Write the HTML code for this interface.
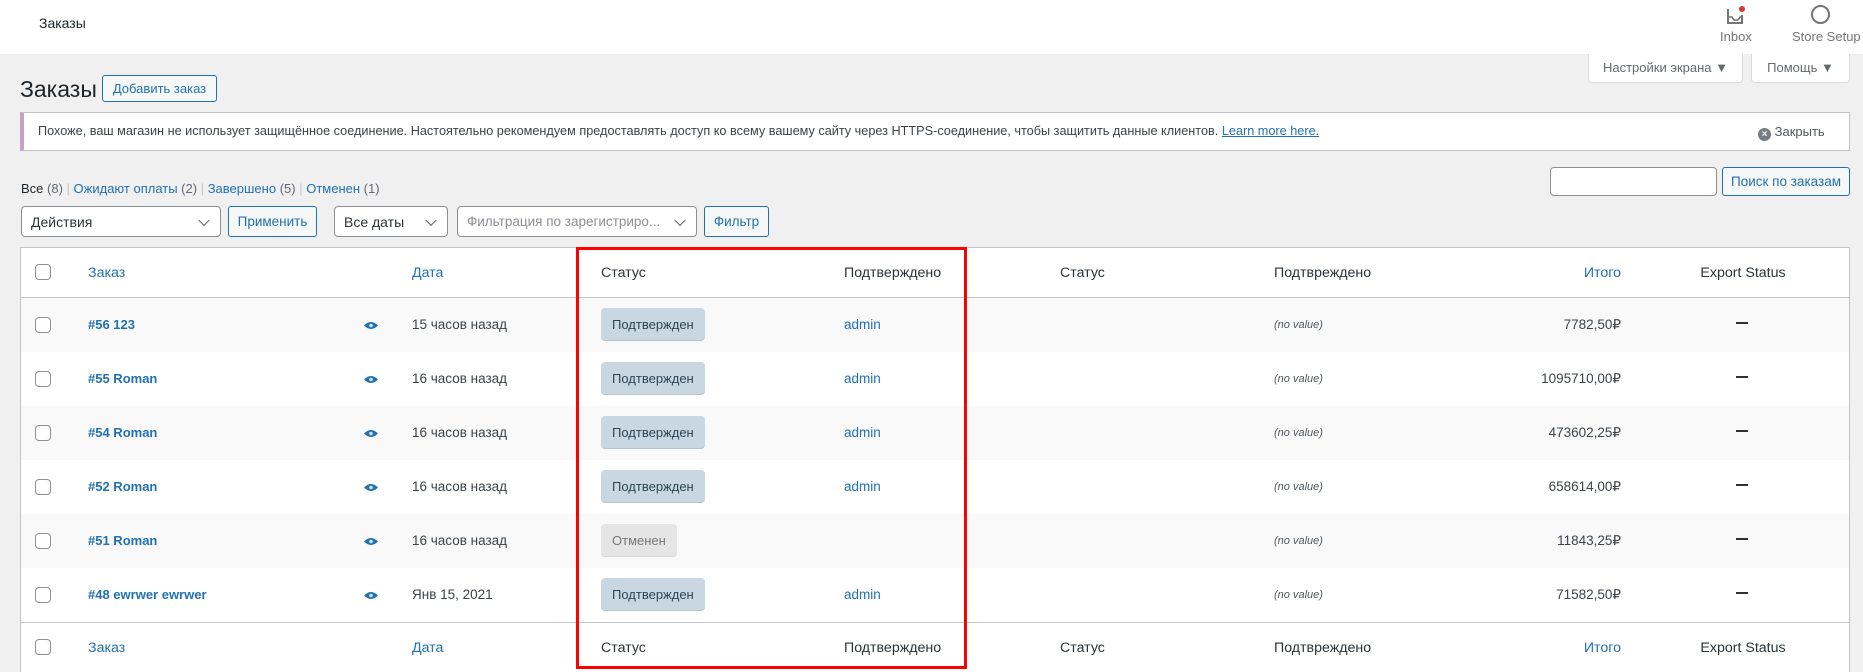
<!DOCTYPE html>
<html><head><meta charset="utf-8">
<style>
*{box-sizing:border-box;margin:0;padding:0}
body{width:1863px;height:670px;overflow:hidden;background:#f0f0f1;font-family:"Liberation Sans",sans-serif;font-size:14.2px;color:#3c434a;position:relative}
.a{position:absolute;white-space:nowrap}
.link{color:#2271b1}
.btn{position:absolute;border:1px solid #2271b1;border-radius:3px;background:#f6f7f7;color:#2271b1;font-size:13.5px;display:flex;align-items:center;justify-content:center}
.sel{position:absolute;border:1px solid #8c8f94;border-radius:4px;background:#fff;font-size:14px;display:flex;align-items:center;padding-left:9px;color:#2c3338}
.sel:after{content:"";position:absolute;right:12px;top:50%;width:7px;height:7px;border-right:1.5px solid #50575e;border-bottom:1.5px solid #50575e;transform:translateY(-70%) rotate(45deg)}
.row{position:absolute;left:20px;width:1830px;height:54px;border-left:1px solid #c3c4c7;border-right:1px solid #c3c4c7}
.cb{position:absolute;left:15px;width:16px;height:16px;border:1px solid #8c8f94;border-radius:4px;background:#fff}
.badge{position:absolute;left:581px;height:33px;border-radius:4px;background:#c8d7e1;color:#2e4453;font-size:13px;display:flex;align-items:center;padding:0 11px;border-bottom:1px solid #b5c5d0}
.nv{font-style:italic;font-size:11px;color:#50575e}
.dash{position:absolute;left:1716px;width:12px;height:2px;background:#2c3338}
.b{font-weight:bold;font-size:13px}
.eye{position:absolute;left:344px;width:14px;height:9px}
.t{font-size:13.5px}
</style></head><body>
<div class="a" style="left:0;top:0;width:1863px;height:54px;background:#fff"></div>
<div class="a" style="left:39px;top:15px;font-size:14px;color:#1d2327">Заказы</div>
<svg class="a" style="left:1725px;top:5px" width="22" height="22" viewBox="0 0 22 22"><path d="M3 4v14h14V10" fill="none" stroke="#757575" stroke-width="2"/><path d="M3 12h4l2 3h4l2-3h2" fill="none" stroke="#757575" stroke-width="1.6"/><circle cx="17" cy="4" r="3" fill="#d63638"/></svg>
<div class="a" style="left:1720px;top:29px;font-size:13px;color:#757575">Inbox</div>
<div class="a" style="left:1811px;top:5px;width:19px;height:19px;border:2px solid #757575;border-radius:50%"></div>
<div class="a" style="left:1792px;top:29px;font-size:13px;color:#757575">Store Setup</div>

<div class="a" style="left:1588px;top:54px;width:155px;height:29px;background:#fff;border:1px solid #dcdcde;border-top:none;border-radius:0 0 4px 4px;font-size:13px;color:#646970;text-align:center;line-height:27px">Настройки экрана ▼</div>
<div class="a" style="left:1751px;top:54px;width:99px;height:29px;background:#fff;border:1px solid #dcdcde;border-top:none;border-radius:0 0 4px 4px;font-size:13px;color:#646970;text-align:center;line-height:27px">Помощь ▼</div>

<div class="a" style="left:20px;top:76px;font-size:23px;color:#1d2327">Заказы</div>
<div class="btn" style="left:102px;top:75px;width:115px;height:27px;font-size:13px">Добавить заказ</div>

<div class="a" style="left:20px;top:112px;width:1830px;height:39px;background:#fff;border:1px solid #c3c4c7;border-left:4px solid #c9a0c6"></div>
<div class="a" style="left:38px;top:124px;font-size:12.7px;color:#3c434a">Похоже, ваш магазин не использует защищённое соединение. Настоятельно рекомендуем предоставлять доступ ко всему вашему сайту через HTTPS-соединение, чтобы защитить данные клиентов. <span class="link" style="text-decoration:underline">Learn more here.</span></div>
<div class="a" style="left:1758px;top:124px;font-size:13px;color:#50575e"><span style="display:inline-block;width:13px;height:13px;border-radius:50%;background:#787c82;color:#fff;font-size:10px;line-height:13px;text-align:center;font-weight:bold;vertical-align:-1px">×</span> Закрыть</div>

<div class="a" style="left:21px;top:181px;font-size:13px;color:#646970"><span style="color:#1d2327">Все</span> (8) <span style="color:#c3c4c7">|</span> <span class="link">Ожидают оплаты</span> (2) <span style="color:#c3c4c7">|</span> <span class="link">Завершено</span> (5) <span style="color:#c3c4c7">|</span> <span class="link">Отменен</span> (1)</div>
<div class="a" style="left:1550px;top:167px;width:167px;height:29px;background:#fff;border:1px solid #8c8f94;border-radius:4px"></div>
<div class="btn" style="left:1722px;top:167px;width:128px;height:29px">Поиск по заказам</div>

<div class="sel" style="left:21px;top:206px;width:200px;height:31px">Действия</div>
<div class="btn" style="left:228px;top:206px;width:89px;height:31px">Применить</div>
<div class="sel" style="left:334px;top:206px;width:114px;height:31px">Все даты</div>
<div class="sel" style="left:457px;top:206px;width:240px;height:31px;color:#8c8f94;font-size:13.5px">Фильтрация по зарегистриро...</div>
<div class="btn" style="left:704px;top:206px;width:65px;height:31px">Фильтр</div>

<div class="row" style="top:247px;height:51px;background:#fff;border-top:1px solid #c3c4c7;border-bottom:1px solid #c3c4c7"></div>
<div class="row" style="top:298px;background:#f9f9f9"></div>
<div class="row" style="top:352px;background:#fff"></div>
<div class="row" style="top:406px;background:#f9f9f9"></div>
<div class="row" style="top:460px;background:#fff"></div>
<div class="row" style="top:514px;background:#f9f9f9"></div>
<div class="row" style="top:568px;background:#fff"></div>
<div class="row" style="top:622px;height:50px;background:#fff;border-top:1px solid #c3c4c7"></div>

<div style="position:absolute;left:20px;top:0">
<div class="cb" style="top:264px"></div>
<div class="a link" style="left:68px;top:265px">Заказ</div>
<div class="a link" style="left:392px;top:265px">Дата</div>
<div class="a" style="left:581px;top:265px;color:#2c3338">Статус</div>
<div class="a" style="left:824px;top:265px;color:#2c3338">Подтверждено</div>
<div class="a" style="left:1040px;top:265px;color:#2c3338">Статус</div>
<div class="a" style="left:1254px;top:265px;color:#2c3338">Подтвреждено</div>
<div class="a link" style="left:1540px;top:265px;width:61px;text-align:right">Итого</div>
<div class="a" style="left:1663px;top:265px;width:120px;text-align:center;color:#2c3338">Export Status</div>
<div class="cb" style="top:639px"></div>
<div class="a link" style="left:68px;top:640px">Заказ</div>
<div class="a link" style="left:392px;top:640px">Дата</div>
<div class="a" style="left:581px;top:640px;color:#2c3338">Статус</div>
<div class="a" style="left:824px;top:640px;color:#2c3338">Подтверждено</div>
<div class="a" style="left:1040px;top:640px;color:#2c3338">Статус</div>
<div class="a" style="left:1254px;top:640px;color:#2c3338">Подтвреждено</div>
<div class="a link" style="left:1540px;top:640px;width:61px;text-align:right">Итого</div>
<div class="a" style="left:1663px;top:640px;width:120px;text-align:center;color:#2c3338">Export Status</div>
</div>

<svg width="0" height="0" style="position:absolute"><defs><symbol id="e" viewBox="0 0 14 9"><path d="M0 4.5Q7 -2.5 14 4.5Q7 11.5 0 4.5Z" fill="#2271b1"/><circle cx="7" cy="4.5" r="1.8" fill="#cfe0ee"/></symbol></defs></svg>

<div style="position:absolute;left:20px;top:0">
<div class="cb" style="top:317px"></div><div class="a link b" style="left:68px;top:317px">#56 123</div><svg class="eye" style="top:321px"><use href="#e"/></svg><div class="a t" style="left:392px;top:317px">15 часов назад</div><div class="badge" style="top:308px">Подтвержден</div><div class="a link t" style="left:824px;top:317px">admin</div><div class="a nv" style="left:1254px;top:319px">(no value)</div><div class="a t" style="left:1450px;top:317px;width:151px;text-align:right">7782,50₽</div><div class="dash" style="top:322px"></div>

<div class="cb" style="top:371px"></div><div class="a link b" style="left:68px;top:371px">#55 Roman</div><svg class="eye" style="top:375px"><use href="#e"/></svg><div class="a t" style="left:392px;top:371px">16 часов назад</div><div class="badge" style="top:362px">Подтвержден</div><div class="a link t" style="left:824px;top:371px">admin</div><div class="a nv" style="left:1254px;top:373px">(no value)</div><div class="a t" style="left:1450px;top:371px;width:151px;text-align:right">1095710,00₽</div><div class="dash" style="top:376px"></div>

<div class="cb" style="top:425px"></div><div class="a link b" style="left:68px;top:425px">#54 Roman</div><svg class="eye" style="top:429px"><use href="#e"/></svg><div class="a t" style="left:392px;top:425px">16 часов назад</div><div class="badge" style="top:416px">Подтвержден</div><div class="a link t" style="left:824px;top:425px">admin</div><div class="a nv" style="left:1254px;top:427px">(no value)</div><div class="a t" style="left:1450px;top:425px;width:151px;text-align:right">473602,25₽</div><div class="dash" style="top:430px"></div>

<div class="cb" style="top:479px"></div><div class="a link b" style="left:68px;top:479px">#52 Roman</div><svg class="eye" style="top:483px"><use href="#e"/></svg><div class="a t" style="left:392px;top:479px">16 часов назад</div><div class="badge" style="top:470px">Подтвержден</div><div class="a link t" style="left:824px;top:479px">admin</div><div class="a nv" style="left:1254px;top:481px">(no value)</div><div class="a t" style="left:1450px;top:479px;width:151px;text-align:right">658614,00₽</div><div class="dash" style="top:484px"></div>

<div class="cb" style="top:533px"></div><div class="a link b" style="left:68px;top:533px">#51 Roman</div><svg class="eye" style="top:537px"><use href="#e"/></svg><div class="a t" style="left:392px;top:533px">16 часов назад</div><div class="badge" style="top:524px;background:#e5e5e5;color:#777;border-bottom-color:#d7d7d7">Отменен</div><div class="a nv" style="left:1254px;top:535px">(no value)</div><div class="a t" style="left:1450px;top:533px;width:151px;text-align:right">11843,25₽</div><div class="dash" style="top:538px"></div>

<div class="cb" style="top:587px"></div><div class="a link b" style="left:68px;top:587px">#48 ewrwer ewrwer</div><svg class="eye" style="top:591px"><use href="#e"/></svg><div class="a t" style="left:392px;top:587px">Янв 15, 2021</div><div class="badge" style="top:578px">Подтвержден</div><div class="a link t" style="left:824px;top:587px">admin</div><div class="a nv" style="left:1254px;top:589px">(no value)</div><div class="a t" style="left:1450px;top:587px;width:151px;text-align:right">71582,50₽</div><div class="dash" style="top:592px"></div>
</div>

<div class="a" style="left:576px;top:247px;width:391px;height:422px;border:3px solid #f00"></div>
</body></html>
